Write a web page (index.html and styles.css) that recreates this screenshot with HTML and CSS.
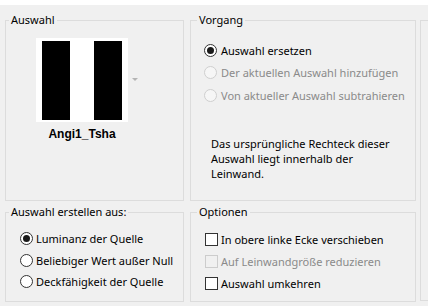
FILE: index.html
```html
<!doctype html>
<html lang="de">
<head>
  <meta charset="utf-8" />
  <title>Auswahl aus Maske</title>
  <link rel="stylesheet" href="styles.css">
</head>
<body>
  <div class="topbar"></div>
  <div class="panel">
    <fieldset class="group group-source">
      <legend class="legend-left">Auswahl</legend>
      <div class="source">
        <div class="thumb-row">
          <div class="thumb">
            <span class="bar"></span>
            <span class="bar"></span>
          </div>
          <span class="drop"></span>
        </div>
        <div class="thumb-name">Angi1_Tsha</div>
      </div>
    </fieldset>

    <fieldset class="group group-mode">
      <legend class="legend-mid">Vorgang</legend>
      <div class="options mode-list">
        <div class="opt"><span class="radio checked"></span>Auswahl ersetzen</div>
        <div class="opt disabled"><span class="radio"></span>Der aktuellen Auswahl hinzufügen</div>
        <div class="opt disabled"><span class="radio"></span>Von aktueller Auswahl subtrahieren</div>
      </div>
      <p class="note">Das ursprüngliche Rechteck dieser Auswahl liegt innerhalb der Leinwand.</p>
    </fieldset>

    <fieldset class="group group-side"></fieldset>

    <fieldset class="group group-create">
      <legend class="legend-left">Auswahl erstellen aus:</legend>
      <div class="options create-list">
        <div class="opt"><span class="radio checked"></span>Luminanz der Quelle</div>
        <div class="opt"><span class="radio"></span>Beliebiger Wert außer Null</div>
        <div class="opt"><span class="radio"></span>Deckfähigkeit der Quelle</div>
      </div>
    </fieldset>

    <fieldset class="group group-opts">
      <legend class="legend-mid">Optionen</legend>
      <div class="options check-list">
        <div class="opt"><span class="check"></span>In obere linke Ecke verschieben</div>
        <div class="opt disabled"><span class="check"></span>Auf Leinwandgröße reduzieren</div>
        <div class="opt"><span class="check"></span>Auswahl umkehren</div>
      </div>
    </fieldset>
  </div>
</body>
</html>
```

FILE: styles.css
```css
*{box-sizing:border-box}
html,body{height:100%}
body{
  margin:0;
  background:#f0f0f0;
  color:#000;
  font-family:"Noto Sans","Open Sans","DejaVu Sans",sans-serif;
  font-size:11px;
  overflow:hidden;
}

.topbar{height:5px;background:#fff}

.panel{
  display:grid;
  grid-template-columns:179px 226px 1fr;
  grid-template-rows:189px 98px;
  column-gap:6px;
  row-gap:3px;
  padding:7px 0 0 5px;
}

.group{
  margin:0;
  padding:0;
  min-width:0;
  border:1px solid #dcdcdc;
}
.group legend{
  line-height:16px;
  padding:0 2px;
}
.legend-left{margin-left:3px}
.legend-mid{margin-left:6px}

.group-side{
  grid-column:3;
  grid-row:1 / span 2;
  margin:8px 0 1px -2px;
  border-right:0;
}
.group-create{grid-column:1;grid-row:2}
.group-opts{grid-column:2;grid-row:2}

/* source thumbnail */
.source{
  padding:10px 0 0 30px;
  width:154px;
}
.thumb-row{display:flex;align-items:center;gap:4px}
.thumb{
  width:92px;
  height:84px;
  background:#fff;
  display:flex;
  justify-content:space-between;
  padding:3px 6px 2px 6px;
}
.bar{width:28px;background:#000}
.drop{
  width:0;height:0;
  border-left:3px solid transparent;
  border-right:3px solid transparent;
  border-top:3px solid #b4b4b4;
  margin-top:-2px;
}
.thumb-name{
  width:92px;
  text-align:center;
  margin-top:4px;
  font-family:"Liberation Sans",Arial,sans-serif;
  font-weight:700;
  font-size:12px;
  line-height:16px;
}

/* option rows */
.options{display:flex;flex-direction:column}
.opt{
  display:flex;
  align-items:center;
  gap:4px;
  height:22.5px;
  white-space:nowrap;
}
.opt.disabled{color:#8a8a8a}

.mode-list{padding:11px 0 0 13px}
.create-list{padding:8px 0 0 14px}
.create-list .opt{height:21.5px;gap:3px}
.check-list{padding:8px 0 0 14px}
.check-list .opt{height:22px;gap:3px}

.radio{
  width:13px;height:13px;
  border:1px solid #333;
  border-radius:50%;
  background:#fff;
  flex:none;
  display:flex;
  align-items:center;
  justify-content:center;
}
.radio.checked::after{
  content:"";
  width:7px;height:7px;
  border-radius:50%;
  background:#1a1a1a;
}
.disabled .radio{border-color:#cfcfcf;background:#f6f6f6}

.check{
  width:13px;height:13px;
  border:1px solid #333;
  background:#fff;
  flex:none;
}
.disabled .check{border-color:#cccccc;background:#f0f0f0}

.note{
  margin:29px 0 0 20px;
  line-height:15px;
  width:190px;
}
```
